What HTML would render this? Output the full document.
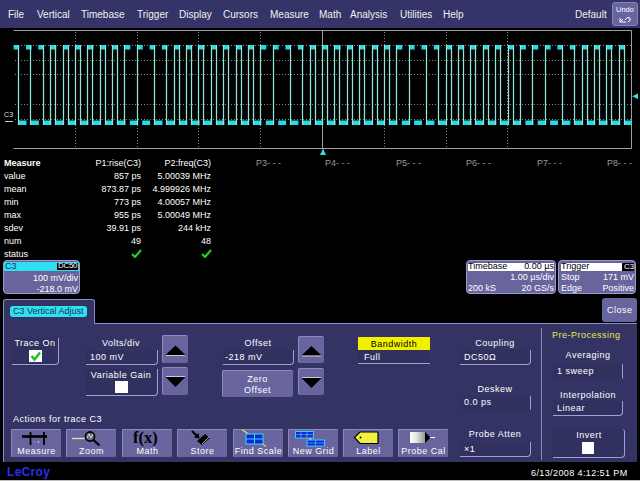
<!DOCTYPE html>
<html><head><meta charset="utf-8">
<style>
*{margin:0;padding:0;box-sizing:border-box}
html,body{width:640px;height:481px;overflow:hidden;background:#000}
body{position:relative;font-family:"Liberation Sans",sans-serif;font-size:9px;letter-spacing:0.5px;color:#fff}
.a{position:absolute;white-space:nowrap;line-height:10px}
#menu{position:absolute;left:0;top:0;width:640px;height:28px;background:#343468}
.mi{position:absolute;top:10px;font-size:10px;line-height:10px;color:#f0f0f0;white-space:nowrap;letter-spacing:0}
.btn{position:absolute;background:#68649e;border-radius:3px}
.r{text-align:right}
.g{color:#9a9a9a}
.t9{font-size:9px;line-height:9px;letter-spacing:0}
.box{position:absolute;background:#68649c;border:1px solid #9c98d0;border-radius:4px}
#panel{position:absolute;left:3px;top:323px;width:634px;height:139px;background:#343464;border-top:1px solid #8a8ac0;border-left:1px solid #8a8ac0}
.fld{position:absolute;background:#31315f;border-right:1px solid #a0a0d8;border-bottom:1px solid #a0a0d8;border-bottom-right-radius:4px}
.nb{border-bottom-color:transparent;border-bottom-right-radius:0}
.tb{position:absolute;background:#68649e;border-radius:2px;border-top:1px solid #8c88c4;border-left:1px solid #8c88c4}
.lbl{position:absolute;text-align:center;white-space:nowrap;line-height:10px}
.ab{position:absolute;top:429px;width:50px;height:28px;background:#68649e;border-radius:1px;border-top:1px solid #8c88c4;border-left:1px solid #8c88c4}
.ab span{position:absolute;left:0;right:0;top:16px;text-align:center;line-height:10px;white-space:nowrap}
</style></head><body>
<div id="menu">
 <div class="mi" style="left:8px">File</div>
 <div class="mi" style="left:37px">Vertical</div>
 <div class="mi" style="left:81px">Timebase</div>
 <div class="mi" style="left:137px">Trigger</div>
 <div class="mi" style="left:179px">Display</div>
 <div class="mi" style="left:223px">Cursors</div>
 <div class="mi" style="left:270px">Measure</div>
 <div class="mi" style="left:319px">Math</div>
 <div class="mi" style="left:350px">Analysis</div>
 <div class="mi" style="left:400px">Utilities</div>
 <div class="mi" style="left:443px">Help</div>
 <div class="mi" style="left:575px">Default</div>
 <div class="btn" style="left:612px;top:2px;width:26px;height:24px;border:1px solid #8484bc"></div>
 <div class="a" style="left:616px;top:6px;font-size:7.5px;line-height:8px;letter-spacing:0">Undo</div>
 <svg style="position:absolute;left:617px;top:14px" width="16" height="10"><path d="M3 8 L9 8 M3 8 L3 4 M3 8 L6 5 M8 6 Q10 2 13 4 Q14 7 11 8" stroke="#fff" stroke-width="1" fill="none"/></svg>
</div>
<svg width="640" height="160" style="position:absolute;left:0;top:0"><path stroke="#888888" stroke-width="1" stroke-dasharray="1 2" fill="none" d="M75.5 32V148M137.5 32V148M198.5 32V148M260.5 32V148M384.5 32V148M446.5 32V148M507.5 32V148M15 45.5H631M15 60.5H631M15 74.5H631M15 104.5H631M15 119.5H631"/><path d="M13.5 30.5H631.5V148.5H13.5M322.5 30.5V148.5" fill="none" stroke="#a0a0a0" stroke-width="1"/><g fill="#22dde8"><rect x="13.6" y="45" width="5.5" height="4.5"/><rect x="18.6" y="120.5" width="7.9" height="4.5"/><rect x="26.0" y="45" width="5.5" height="4.5"/><rect x="31.0" y="120.5" width="7.9" height="4.5"/><rect x="38.3" y="45" width="5.5" height="4.5"/><rect x="43.3" y="120.5" width="7.9" height="4.5"/><rect x="50.7" y="45" width="5.5" height="4.5"/><rect x="55.7" y="120.5" width="7.9" height="4.5"/><rect x="63.0" y="45" width="5.5" height="4.5"/><rect x="68.0" y="120.5" width="7.9" height="4.5"/><rect x="75.4" y="45" width="5.5" height="4.5"/><rect x="80.4" y="120.5" width="7.9" height="4.5"/><rect x="87.8" y="45" width="5.5" height="4.5"/><rect x="92.8" y="120.5" width="7.9" height="4.5"/><rect x="100.1" y="45" width="5.5" height="4.5"/><rect x="105.1" y="120.5" width="7.9" height="4.5"/><rect x="112.5" y="45" width="5.5" height="4.5"/><rect x="117.5" y="120.5" width="7.9" height="4.5"/><rect x="124.8" y="45" width="5.5" height="4.5"/><rect x="129.8" y="120.5" width="7.9" height="4.5"/><rect x="137.2" y="45" width="5.5" height="4.5"/><rect x="142.2" y="120.5" width="7.9" height="4.5"/><rect x="149.6" y="45" width="5.5" height="4.5"/><rect x="154.6" y="120.5" width="7.9" height="4.5"/><rect x="161.9" y="45" width="5.5" height="4.5"/><rect x="166.9" y="120.5" width="7.9" height="4.5"/><rect x="174.3" y="45" width="5.5" height="4.5"/><rect x="179.3" y="120.5" width="7.9" height="4.5"/><rect x="186.6" y="45" width="5.5" height="4.5"/><rect x="191.6" y="120.5" width="7.9" height="4.5"/><rect x="199.0" y="45" width="5.5" height="4.5"/><rect x="204.0" y="120.5" width="7.9" height="4.5"/><rect x="211.4" y="45" width="5.5" height="4.5"/><rect x="216.4" y="120.5" width="7.9" height="4.5"/><rect x="223.7" y="45" width="5.5" height="4.5"/><rect x="228.7" y="120.5" width="7.9" height="4.5"/><rect x="236.1" y="45" width="5.5" height="4.5"/><rect x="241.1" y="120.5" width="7.9" height="4.5"/><rect x="248.4" y="45" width="5.5" height="4.5"/><rect x="253.4" y="120.5" width="7.9" height="4.5"/><rect x="260.8" y="45" width="5.5" height="4.5"/><rect x="265.8" y="120.5" width="7.9" height="4.5"/><rect x="273.2" y="45" width="5.5" height="4.5"/><rect x="278.2" y="120.5" width="7.9" height="4.5"/><rect x="285.5" y="45" width="5.5" height="4.5"/><rect x="290.5" y="120.5" width="7.9" height="4.5"/><rect x="297.9" y="45" width="5.5" height="4.5"/><rect x="302.9" y="120.5" width="7.9" height="4.5"/><rect x="310.2" y="45" width="5.5" height="4.5"/><rect x="315.2" y="120.5" width="7.9" height="4.5"/><rect x="322.6" y="45" width="5.5" height="4.5"/><rect x="327.6" y="120.5" width="7.9" height="4.5"/><rect x="335.0" y="45" width="5.5" height="4.5"/><rect x="340.0" y="120.5" width="7.9" height="4.5"/><rect x="347.3" y="45" width="5.5" height="4.5"/><rect x="352.3" y="120.5" width="7.9" height="4.5"/><rect x="359.7" y="45" width="5.5" height="4.5"/><rect x="364.7" y="120.5" width="7.9" height="4.5"/><rect x="372.0" y="45" width="5.5" height="4.5"/><rect x="377.0" y="120.5" width="7.9" height="4.5"/><rect x="384.4" y="45" width="5.5" height="4.5"/><rect x="389.4" y="120.5" width="7.9" height="4.5"/><rect x="396.8" y="45" width="5.5" height="4.5"/><rect x="401.8" y="120.5" width="7.9" height="4.5"/><rect x="409.1" y="45" width="5.5" height="4.5"/><rect x="414.1" y="120.5" width="7.9" height="4.5"/><rect x="421.5" y="45" width="5.5" height="4.5"/><rect x="426.5" y="120.5" width="7.9" height="4.5"/><rect x="433.8" y="45" width="5.5" height="4.5"/><rect x="438.8" y="120.5" width="7.9" height="4.5"/><rect x="446.2" y="45" width="5.5" height="4.5"/><rect x="451.2" y="120.5" width="7.9" height="4.5"/><rect x="458.6" y="45" width="5.5" height="4.5"/><rect x="463.6" y="120.5" width="7.9" height="4.5"/><rect x="470.9" y="45" width="5.5" height="4.5"/><rect x="475.9" y="120.5" width="7.9" height="4.5"/><rect x="483.3" y="45" width="5.5" height="4.5"/><rect x="488.3" y="120.5" width="7.9" height="4.5"/><rect x="495.6" y="45" width="5.5" height="4.5"/><rect x="500.6" y="120.5" width="7.9" height="4.5"/><rect x="508.0" y="45" width="5.5" height="4.5"/><rect x="513.0" y="120.5" width="7.9" height="4.5"/><rect x="520.4" y="45" width="5.5" height="4.5"/><rect x="525.4" y="120.5" width="7.9" height="4.5"/><rect x="532.7" y="45" width="5.5" height="4.5"/><rect x="537.7" y="120.5" width="7.9" height="4.5"/><rect x="545.1" y="45" width="5.5" height="4.5"/><rect x="550.1" y="120.5" width="7.9" height="4.5"/><rect x="557.4" y="45" width="5.5" height="4.5"/><rect x="562.4" y="120.5" width="7.9" height="4.5"/><rect x="569.8" y="45" width="5.5" height="4.5"/><rect x="574.8" y="120.5" width="7.9" height="4.5"/><rect x="582.2" y="45" width="5.5" height="4.5"/><rect x="587.2" y="120.5" width="7.9" height="4.5"/><rect x="594.5" y="45" width="5.5" height="4.5"/><rect x="599.5" y="120.5" width="7.9" height="4.5"/><rect x="606.9" y="45" width="5.5" height="4.5"/><rect x="611.9" y="120.5" width="7.9" height="4.5"/><rect x="619.2" y="45" width="5.5" height="4.5"/><rect x="624.2" y="120.5" width="7.8" height="4.5"/></g><path stroke="#90e4d8" stroke-width="1.25" fill="none" d="M18.5 45V125M30.5 45V125M43.5 45V125M50.5 45V125M55.5 45V125M63.5 45V125M68.5 45V125M75.5 45V125M80.5 45V125M87.5 45V125M92.5 45V125M100.5 45V125M105.5 45V125M112.5 45V125M117.5 45V125M124.5 45V125M137.5 45V125M154.5 45V125M166.5 45V125M174.5 45V125M179.5 45V125M186.5 45V125M191.5 45V125M198.5 45V125M203.5 45V125M211.5 45V125M216.5 45V125M223.5 45V125M228.5 45V125M236.5 45V125M241.5 45V125M248.5 45V125M253.5 45V125M260.5 45V125M273.5 45V125M290.5 45V125M302.5 45V125M310.5 45V125M315.5 45V125M322.5 45V125M327.5 45V125M334.5 45V125M339.5 45V125M347.5 45V125M352.5 45V125M359.5 45V125M364.5 45V125M372.5 45V125M377.5 45V125M384.5 45V125M389.5 45V125M396.5 45V125M409.5 45V125M426.5 45V125M438.5 45V125M446.5 45V125M451.5 45V125M458.5 45V125M463.5 45V125M470.5 45V125M475.5 45V125M483.5 45V125M488.5 45V125M495.5 45V125M500.5 45V125M508.5 45V125M513.5 45V125M520.5 45V125M532.5 45V125M545.5 45V125M562.5 45V125M574.5 45V125M582.5 45V125M587.5 45V125M594.5 45V125M599.5 45V125M606.5 45V125M611.5 45V125M619.5 45V125M624.5 45V125"/><path d="M632 96.2L638 93.5V99Z" fill="#30e0e0"/><path d="M323 148.5L320 155H326Z" fill="#30e0e0"/></svg>
<div class="a" style="left:4px;top:111px;font-size:7px;line-height:8px;letter-spacing:0.2px;color:#ddd">C3</div>
<div style="position:absolute;left:5px;top:121px;width:8px;height:1px;background:#ccc"></div>

<div class="a t9" style="left:4px;top:159px;font-weight:bold">Measure</div>
<div class="a t9" style="left:4px;top:172px">value</div>
<div class="a t9" style="left:4px;top:185px">mean</div>
<div class="a t9" style="left:4px;top:198px">min</div>
<div class="a t9" style="left:4px;top:211px">max</div>
<div class="a t9" style="left:4px;top:224px">sdev</div>
<div class="a t9" style="left:4px;top:237px">num</div>
<div class="a t9" style="left:4px;top:250px">status</div>

<div class="a r t9" style="right:499px;top:159px">P1:rise(C3)</div>
<div class="a r t9" style="right:499px;top:172px">857 ps</div>
<div class="a r t9" style="right:499px;top:185px">873.87 ps</div>
<div class="a r t9" style="right:499px;top:198px">773 ps</div>
<div class="a r t9" style="right:499px;top:211px">955 ps</div>
<div class="a r t9" style="right:499px;top:224px">39.91 ps</div>
<div class="a r t9" style="right:499px;top:237px">49</div>
<svg style="position:absolute;left:131px;top:249px" width="11" height="9"><path d="M1 5 L4 8 L10 1" stroke="#22cc22" stroke-width="2.2" fill="none"/></svg>

<div class="a r t9" style="right:429px;top:159px">P2:freq(C3)</div>
<div class="a r t9" style="right:429px;top:172px">5.00039 MHz</div>
<div class="a r t9" style="right:429px;top:185px">4.999926 MHz</div>
<div class="a r t9" style="right:429px;top:198px">4.00057 MHz</div>
<div class="a r t9" style="right:429px;top:211px">5.00049 MHz</div>
<div class="a r t9" style="right:429px;top:224px">244 kHz</div>
<div class="a r t9" style="right:429px;top:237px">48</div>
<svg style="position:absolute;left:201px;top:249px" width="11" height="9"><path d="M1 5 L4 8 L10 1" stroke="#22cc22" stroke-width="2.2" fill="none"/></svg>

<div class="a g t9" style="left:256px;top:159px">P3- - -</div>
<div class="a g t9" style="left:325px;top:159px">P4- - -</div>
<div class="a g t9" style="left:396px;top:159px">P5- - -</div>
<div class="a g t9" style="left:466px;top:159px">P6- - -</div>
<div class="a g t9" style="left:537px;top:159px">P7- - -</div>
<div class="a g t9" style="left:607px;top:159px">P8- - -</div>

<!-- C3 box -->
<div class="box" style="left:3px;top:260px;width:77px;height:34px"></div>
<div style="position:absolute;left:4px;top:262px;width:75px;height:9px;background:#30e0f0"></div>
<div class="a t9" style="left:5px;top:262px;color:#1a3060">C3</div>
<div style="position:absolute;left:57px;top:263px;width:21px;height:7px;background:#000"></div>
<div class="a" style="left:58px;top:262px;font-size:8px;line-height:8px;letter-spacing:-0.3px;color:#fff">DC50</div>
<div class="a r t9" style="right:562px;top:274px">100 mV/div</div>
<div class="a r t9" style="right:562px;top:285px">-218.0 mV</div>

<!-- timebase / trigger -->
<div class="box" style="left:466px;top:260px;width:90px;height:34px"></div>
<div style="position:absolute;left:468px;top:263px;width:86px;height:8px;background:#fff"></div>
<div class="a t9" style="left:468px;top:262px;color:#000">Timebase</div>
<div class="a r t9" style="right:86px;top:262px;color:#000">0.00 µs</div>
<div class="a r t9" style="right:86px;top:273px">1.00 µs/div</div>
<div class="a t9" style="left:468px;top:284px">200 kS</div>
<div class="a r t9" style="right:86px;top:284px">20 GS/s</div>

<div class="box" style="left:558px;top:260px;width:78px;height:34px"></div>
<div style="position:absolute;left:561px;top:263px;width:73px;height:8px;background:#fff"></div>
<div class="a t9" style="left:561px;top:262px;color:#000">Trigger</div>
<div style="position:absolute;left:622px;top:263px;width:12px;height:8px;background:#000"></div>
<div class="a" style="left:624px;top:263px;font-size:8px;line-height:8px;letter-spacing:0;color:#fff">C3</div>
<div class="a t9" style="left:561px;top:273px">Stop</div>
<div class="a r t9" style="right:6px;top:273px">171 mV</div>
<div class="a t9" style="left:561px;top:284px">Edge</div>
<div class="a r t9" style="right:6px;top:284px">Positive</div>

<div class="btn" style="left:602px;top:298px;width:35px;height:24px;background:#68649e"></div>
<div class="a" style="left:607px;top:305px">Close</div>

<!-- tab + panel -->
<div style="position:absolute;left:3px;top:299px;width:92px;height:26px;background:#343464;border-top:1px solid #8a8ac0;border-left:1px solid #8a8ac0;border-right:1px solid #8a8ac0;border-radius:3px 3px 0 0"></div>
<div id="panel"></div>
<div style="position:absolute;left:4px;top:323px;width:90px;height:2px;background:#343464"></div>
<div style="position:absolute;left:10px;top:306px;width:77px;height:11px;background:#30e0f0;border-radius:3px"></div>
<div class="a t9" style="left:13px;top:307px;color:#1a3060">C3 Vertical Adjust</div>

<!-- trace on -->
<div class="fld" style="left:12px;top:338px;width:47px;height:27px"></div>
<div class="lbl" style="left:12px;top:338px;width:46px">Trace On</div>
<div style="position:absolute;left:29px;top:350px;width:13px;height:12px;background:#fff"></div>
<svg style="position:absolute;left:29px;top:350px" width="13" height="12"><path d="M2.5 6 L5.5 9.5 L11 2.5" stroke="#22bb22" stroke-width="2.4" fill="none"/></svg>

<!-- volts/div -->
<div class="lbl" style="left:86px;top:338px;width:70px">Volts/div</div>
<div class="fld" style="left:86px;top:350px;width:72px;height:15px"></div>
<div class="a" style="left:90px;top:352px">100 mV</div>
<div class="fld" style="left:86px;top:369px;width:72px;height:27px"></div>
<div class="lbl" style="left:86px;top:370px;width:70px">Variable Gain</div>
<div style="position:absolute;left:115px;top:381px;width:13px;height:12px;background:#fff"></div>
<div class="tb" style="left:162px;top:335px;width:26px;height:28px"></div>
<div class="tb" style="left:162px;top:367px;width:26px;height:28px"></div>
<svg style="position:absolute;left:162px;top:335px" width="26" height="28"><path d="M3.5 20 L13.5 10.5 L23.5 20 Z" fill="#000"/><path d="M4 20.5 H23" stroke="#c8c8e0" stroke-width="1"/></svg>
<svg style="position:absolute;left:162px;top:367px" width="26" height="28"><path d="M3.5 10 L13.5 20 L23.5 10 Z" fill="#000"/><path d="M4 9.5 H23" stroke="#c8c8e0" stroke-width="1"/></svg>

<!-- offset -->
<div class="lbl" style="left:223px;top:338px;width:70px">Offset</div>
<div class="fld" style="left:223px;top:350px;width:71px;height:15px"></div>
<div class="a" style="left:225px;top:352px">-218 mV</div>
<div class="tb" style="left:222px;top:370px;width:71px;height:27px"></div>
<div class="lbl" style="left:222px;top:374px;width:71px">Zero</div>
<div class="lbl" style="left:222px;top:385px;width:71px">Offset</div>
<div class="tb" style="left:298px;top:336px;width:26px;height:27px"></div>
<div class="tb" style="left:298px;top:368px;width:26px;height:27px"></div>
<svg style="position:absolute;left:298px;top:336px" width="26" height="27"><path d="M3.5 19.5 L13.5 10 L23.5 19.5 Z" fill="#000"/><path d="M4 20 H23" stroke="#c8c8e0" stroke-width="1"/></svg>
<svg style="position:absolute;left:298px;top:368px" width="26" height="27"><path d="M3.5 10 L13.5 20 L23.5 10 Z" fill="#000"/><path d="M4 9.5 H23" stroke="#c8c8e0" stroke-width="1"/></svg>

<!-- bandwidth -->
<div style="position:absolute;left:358px;top:337px;width:72px;height:13px;background:#f0f000"></div>
<div class="lbl" style="left:358px;top:339px;width:72px;color:#000">Bandwidth</div>
<div style="position:absolute;left:358px;top:350px;width:72px;height:13px;background:#31315f"></div>
<div class="a" style="left:364px;top:352px">Full</div>
<div style="position:absolute;left:358px;top:363px;width:72px;height:1px;background:#a0a0d8"></div>

<!-- coupling etc -->
<div class="lbl" style="left:460px;top:338px;width:70px">Coupling</div>
<div class="fld" style="left:460px;top:350px;width:71px;height:15px"></div>
<div class="a" style="left:464px;top:352px">DC50Ω</div>
<div class="lbl" style="left:460px;top:384px;width:70px">Deskew</div>
<div class="fld nb" style="left:460px;top:396px;width:71px;height:14px"></div>
<div class="a" style="left:464px;top:397px">0.0 ps</div>
<div class="lbl" style="left:460px;top:429px;width:70px">Probe Atten</div>
<div class="fld" style="left:460px;top:442px;width:71px;height:15px"></div>
<div class="a" style="left:464px;top:444px">×1</div>

<div style="position:absolute;left:541px;top:328px;width:1px;height:132px;background:#8a8ac0"></div>
<div class="a" style="left:552px;top:330px;color:#e8e850">Pre-Processing</div>
<div class="lbl" style="left:553px;top:350px;width:70px">Averaging</div>
<div class="fld nb" style="left:553px;top:364px;width:70px;height:15px"></div>
<div class="a" style="left:557px;top:366px">1 sweep</div>
<div class="lbl" style="left:553px;top:390px;width:70px">Interpolation</div>
<div class="fld" style="left:553px;top:401px;width:70px;height:15px"></div>
<div class="a" style="left:557px;top:403px">Linear</div>
<div class="fld" style="left:553px;top:429px;width:72px;height:29px;border-top-right-radius:3px"></div>
<div class="lbl" style="left:553px;top:430px;width:72px">Invert</div>
<div style="position:absolute;left:582px;top:442px;width:12px;height:12px;background:#fff"></div>

<div class="a" style="left:13px;top:414px">Actions for trace C3</div>

<div class="ab" style="left:11px"><span>Measure</span></div>
<div class="ab" style="left:66px"><span>Zoom</span></div>
<div class="ab" style="left:122px"><span>Math</span></div>
<div class="ab" style="left:177px"><span>Store</span></div>
<div class="ab" style="left:233px"><span>Find Scale</span></div>
<div class="ab" style="left:288px"><span>New Grid</span></div>
<div class="ab" style="left:343px"><span>Label</span></div>
<div class="ab" style="left:398px"><span>Probe Cal</span></div>
<svg style="position:absolute;left:0;top:428px" width="460" height="20">
 <!-- measure -->
 <path d="M22 8.5H47" stroke="#000" stroke-width="2.6"/>
 <path d="M30.5 4V17M44 4V17" stroke="#000" stroke-width="1.8"/>
 <path d="M34 14h1M38 13l1 2M39 13l-1 2" stroke="#ccc" stroke-width="0.8"/>
 <!-- zoom -->
 <path d="M72 10.5H85" stroke="#e8e090" stroke-width="1.4"/>
 <circle cx="90" cy="8.5" r="4.6" fill="none" stroke="#000" stroke-width="1.6"/>
 <path d="M87 10L89 6L91 10L93 6" stroke="#e8d890" stroke-width="1" fill="none"/>
 <path d="M93.5 12L99.5 17.5" stroke="#000" stroke-width="2.2"/>
 <!-- store -->
 <path d="M192 3L198 9" stroke="#000" stroke-width="2.2"/>
 <path d="M199.5 10.5L194 9.5L198.5 5Z" fill="#000"/>
 <path d="M197 13L205 6L210 10L202 17Z" fill="#000"/>
 <path d="M202 16L209.5 8.5" stroke="#ddd" stroke-width="0.8"/>
 <!-- find scale -->
 <path d="M242 1.5L266 18.5" stroke="#e0d870" stroke-width="1.3"/>
 <rect x="246" y="6" width="17" height="10" fill="#0a2ad0" stroke="#30d8ff" stroke-width="1"/>
 <path d="M246 11H263M254.5 6V16" stroke="#30d8ff" stroke-width="1"/>
 <!-- new grid -->
 <rect x="295.5" y="3.5" width="18" height="6.5" fill="#0a2ad0" stroke="#40c8ff" stroke-width="1"/>
 <path d="M296 6.7H313M301 4V10M307 4V10" stroke="#60c0ff" stroke-width="0.7"/>
 <path d="M310 10L311 13" stroke="#e0d060" stroke-width="1.5"/>
 <rect x="307" y="12" width="17.5" height="6" fill="#0a2ad0" stroke="#40c8ff" stroke-width="1"/>
 <path d="M307 15H324M315.5 12V18" stroke="#60c0ff" stroke-width="0.7"/>
 <!-- label -->
 <path d="M354.5 9.5L360 4H378V15.5H360Z" fill="#f0f040" stroke="#000" stroke-width="1.2"/>
 <circle cx="360.5" cy="9.5" r="1" fill="#000"/>
 <!-- probe -->
 <defs><linearGradient id="pg" x1="0" y1="0" x2="1" y2="0"><stop offset="0" stop-color="#fff"/><stop offset="0.4" stop-color="#e8e8e8"/><stop offset="1" stop-color="#999"/></linearGradient></defs>
 <rect x="410" y="4" width="15" height="11" fill="url(#pg)"/>
 <path d="M425 4L430.5 9.5L425 15Z" fill="#000"/>
 <path d="M430 9.5H435" stroke="#fff" stroke-width="1"/>
</svg>
<div class="a" style="left:133px;top:429px;font-family:'Liberation Serif',serif;font-weight:bold;font-size:16.5px;line-height:17px;letter-spacing:0;color:#000">f(x)</div>
<div class="a" style="left:7px;top:466px;color:#2830e8;font-size:12px;line-height:12px;font-weight:bold;letter-spacing:0.3px">LeCroy</div>
<div style="position:absolute;left:0;top:480px;width:640px;height:1px;background:#c0c0c0"></div>
<div class="a" style="left:531px;top:468px;letter-spacing:0.4px">6/13/2008 4:12:51 PM</div>
</body></html>
